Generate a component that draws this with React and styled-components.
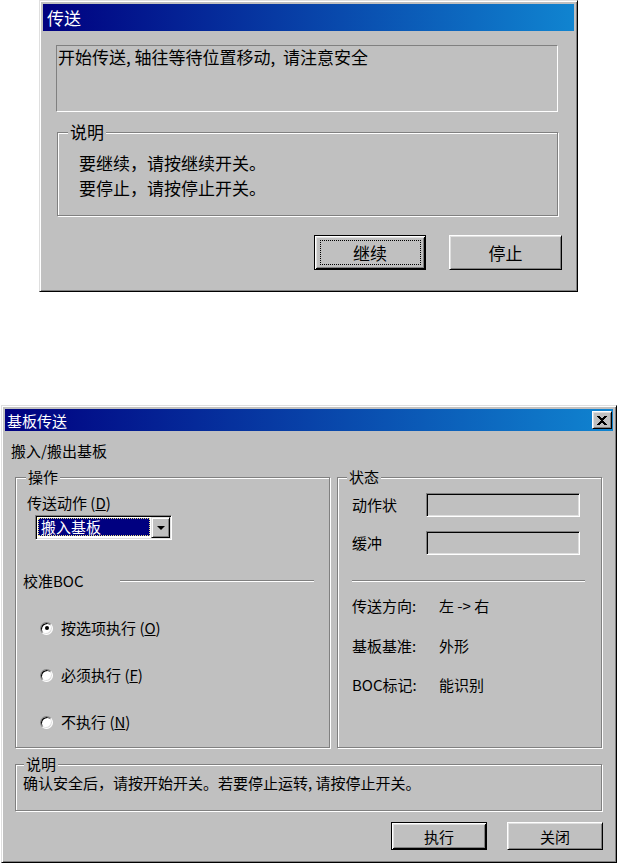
import React from "react";
import styled, { createGlobalStyle, css } from "styled-components";

const FACE = "#c0c0c0";
const FONT = `"Noto Sans CJK SC", "Noto Sans", sans-serif`;

const GlobalStyle = createGlobalStyle`
  html, body { margin: 0; padding: 0; background: #fff; }
  body { font-family: ${FONT}; color: #000; }
  * { box-sizing: border-box; }
`;

const Page = styled.div`
  display: flex;
  flex-direction: column;
  align-items: flex-start;
`;

const Window = styled.div`
  width: ${(p) => p.$w}px;
  height: ${(p) => p.$h}px;
  margin: ${(p) => p.$margin};
  display: flex;
  flex-direction: column;
  padding: 3px;
  background: ${FACE};
  border: 1px solid;
  border-color: #dfdfdf #000 #000 #dfdfdf;
  box-shadow: inset 1px 1px #fff, inset -1px -1px #808080;
  font-size: ${(p) => p.$font}px;
`;

const TitleBar = styled.div`
  flex: none;
  height: ${(p) => p.$h}px;
  display: flex;
  align-items: center;
  justify-content: space-between;
  padding: 0 1px 0 ${(p) => p.$indent}px;
  background: linear-gradient(to right, #000080, #1084d0);
  color: #fff;
  line-height: 1;
`;

const CloseButton = styled.button`
  width: 20px;
  height: 18px;
  padding: 0;
  display: flex;
  align-items: center;
  justify-content: center;
  background: ${FACE};
  border: 1px solid;
  border-color: #fff #000 #000 #fff;
  box-shadow: inset 1px 1px #dfdfdf, inset -1px -1px #808080;
`;

const Client = styled.div`
  flex: 1;
  display: flex;
  flex-direction: column;
  padding: ${(p) => p.$pad};
`;

const MessageBox = styled.div`
  height: 67px;
  padding: 1px 0 0 1px;
  border: 1px solid;
  border-color: #808080 #fff #fff #808080;
  line-height: 20px;
  white-space: pre;
`;

const Group = styled.fieldset`
  margin: ${(p) => p.$margin || 0};
  padding: 0;
  min-width: 0;
  height: ${(p) => (p.$h ? `${p.$h}px` : "auto")};
  border: 1px solid #808080;
  box-shadow: inset 1px 1px #fff, 1px 1px #fff;
`;

const Legend = styled.legend`
  margin-left: ${(p) => p.$offset}px;
  padding: 0 2px;
  line-height: ${(p) => p.$lh}px;
  background: ${FACE};
`;

const NoteLines = styled.div`
  padding: 8px 0 15px 21px;
  line-height: 25px;
`;

const ButtonRow = styled.div`
  display: flex;
  justify-content: flex-end;
  gap: ${(p) => p.$gap}px;
  margin: ${(p) => p.$margin};
`;

const Button = styled.button`
  position: relative;
  width: ${(p) => p.$w}px;
  height: ${(p) => p.$h}px;
  padding: 0;
  font-family: ${FONT};
  font-size: inherit;
  color: #000;
  background: ${FACE};
  border: 1px solid;
  border-color: #fff #000 #000 #fff;
  box-shadow: inset 1px 1px #dfdfdf, inset -1px -1px #808080;
  ${(p) =>
    p.$default &&
    css`
      border-color: #000;
      box-shadow: inset 1px 1px #fff, inset -1px -1px #000,
        inset 2px 2px #dfdfdf, inset -2px -2px #808080;
    `}
  ${(p) =>
    p.$focused &&
    css`
      &::after {
        content: "";
        position: absolute;
        inset: 4px 4px 4px 5px;
        border: 1px dotted #000;
      }
    `}
`;

const Caption = styled.div`
  line-height: 18px;
`;

const GroupRow = styled.div`
  display: grid;
  grid-template-columns: 315px 265px;
  gap: 7px;
  margin: 8px 0 0 4px;
`;

const Column = styled.div`
  display: flex;
  flex-direction: column;
  padding: ${(p) => p.$pad};
`;

const Label = styled.div`
  line-height: 18px;
  margin: ${(p) => p.$margin || 0};
  white-space: pre;
`;

const Key = styled.span`
  text-decoration: underline;
`;

const Combo = styled.div`
  width: 137px;
  height: 25px;
  margin: 3px 0 0 19px;
  display: flex;
  background: #fff;
  border: 1px solid;
  border-color: #808080 #fff #fff #808080;
  box-shadow: inset 1px 1px #000, inset -1px -1px #dfdfdf;
  padding: 1px;
`;

const ComboValue = styled.div`
  flex: 1;
  margin: 1px 1px 2px 1px;
  padding-left: 2px;
  background: #000080;
  color: #fff;
  line-height: 16px;
  border: 1px dotted #e8e080;
`;

const ComboArrow = styled.div`
  width: 19px;
  display: flex;
  align-items: center;
  justify-content: center;
  background: ${FACE};
  border: 1px solid;
  border-color: #dfdfdf #000 #000 #dfdfdf;
  box-shadow: inset 1px 1px #fff, inset -1px -1px #808080;

  &::before {
    content: "";
    border-left: 4px solid transparent;
    border-right: 4px solid transparent;
    border-top: 4px solid #000;
  }
`;

const SectionRow = styled.div`
  display: flex;
  align-items: center;
  margin: ${(p) => p.$margin};
  padding: ${(p) => p.$pad};
`;

const SectionLabel = styled.span`
  width: 97px;
  line-height: 18px;
`;

const Etched = styled.div`
  flex: ${(p) => (p.$grow ? 1 : "none")};
  height: 2px;
  margin: ${(p) => p.$margin || 0};
  border-top: 1px solid #808080;
  border-bottom: 1px solid #fff;
`;

const RadioList = styled.div`
  display: flex;
  flex-direction: column;
  gap: 29px;
  margin: 29px 0 0 24px;
`;

const RadioRow = styled.label`
  display: flex;
  align-items: center;
  gap: 8px;
  line-height: 18px;
`;

const RadioDot = styled.span`
  flex: none;
  width: 13px;
  height: 13px;
  border-radius: 50%;
  display: flex;
  align-items: center;
  justify-content: center;
  background: #fff;
  border: 1px solid;
  border-color: #808080 #fff #fff #808080;
  box-shadow: inset 1px 1px #000, inset -1px -1px #dfdfdf;

  &::after {
    content: "";
    display: ${(p) => (p.$checked ? "block" : "none")};
    width: 4px;
    height: 4px;
    border-radius: 50%;
    background: #000;
  }
`;

const FieldRow = styled.div`
  display: flex;
  align-items: center;
  margin-top: ${(p) => p.$top}px;
`;

const FieldLabel = styled.span`
  width: ${(p) => p.$w}px;
  line-height: 18px;
  white-space: pre;
`;

const Field = styled.div`
  width: 154px;
  height: 24px;
  background: ${FACE};
  border: 1px solid;
  border-color: #808080 #fff #fff #808080;
  box-shadow: inset 1px 1px #000, inset -1px -1px #dfdfdf;
`;

const NoteText = styled.div`
  padding: 2px 0 0 7px;
  line-height: 18px;
  white-space: pre;
`;

function CloseGlyph() {
  return (
    <svg width="10" height="9" viewBox="0 0 10 9" shapeRendering="crispEdges">
      <path
        fill="#000"
        d="M0 0h3v1H0zM7 0h3v1H7zM1 1h3v1H1zM6 1h3v1H6zM2 2h6v1H2zM3 3h4v1H3zM4 4h2v1H4zM3 5h4v1H3zM2 6h6v1H2zM1 7h3v1H1zM6 7h3v1H6zM0 8h3v1H0zM7 8h3v1H7z"
      />
    </svg>
  );
}

function TransferAlert() {
  return (
    <Window $w={539} $h={292} $margin="0 0 0 39px" $font={17}>
      <TitleBar $h={27} $indent={4}>
        <span>传送</span>
      </TitleBar>
      <Client $pad="14px 16px 0 13px">
        <MessageBox>{"开始传送, 轴往等待位置移动,  请注意安全"}</MessageBox>
        <Group $margin="10px 0 0 1px">
          <Legend $offset={10} $lh={20}>
            说明
          </Legend>
          <NoteLines>
            <div>要继续，请按继续开关。</div>
            <div>要停止，请按停止开关。</div>
          </NoteLines>
        </Group>
        <ButtonRow $gap={23} $margin="19px -4px 0 0">
          <Button $w={112} $h={35} $default $focused>
            继续
          </Button>
          <Button $w={113} $h={35}>
            停止
          </Button>
        </ButtonRow>
      </Client>
    </Window>
  );
}

const RADIOS = [
  { text: "按选项执行 ", key: "O", checked: true },
  { text: "必须执行 ", key: "F" },
  { text: "不执行 ", key: "N" },
];

const INFO = [
  { label: "传送方向:", value: "左 -> 右", top: 15 },
  { label: "基板基准:", value: "外形", top: 22 },
  { label: "BOC标记:", value: "能识别", top: 21 },
];

function BoardTransfer() {
  return (
    <Window $w={616} $h={458} $margin="113px 0 0 1px" $font={15}>
      <TitleBar $h={22} $indent={2}>
        <span>基板传送</span>
        <CloseButton>
          <CloseGlyph />
        </CloseButton>
      </TitleBar>
      <Client $pad="11px 11px 0 6px">
        <Caption>搬入/搬出基板</Caption>
        <GroupRow>
          <Group $h={280}>
            <Legend $offset={10} $lh={18}>
              操作
            </Legend>
            <Column $pad="0 15px 0 0">
              <Label $margin="8px 0 0 11px">
                传送动作 (<Key>D</Key>)
              </Label>
              <Combo>
                <ComboValue>搬入基板</ComboValue>
                <ComboArrow />
              </Combo>
              <SectionRow $margin="32px 0 0 0" $pad="0 0 0 7px">
                <SectionLabel>校准BOC</SectionLabel>
                <Etched $grow />
              </SectionRow>
              <RadioList>
                {RADIOS.map((r) => (
                  <RadioRow key={r.key}>
                    <RadioDot $checked={r.checked} />
                    <span>
                      {r.text}(<Key>{r.key}</Key>)
                    </span>
                  </RadioRow>
                ))}
              </RadioList>
            </Column>
          </Group>
          <Group $h={280}>
            <Legend $offset={9} $lh={18}>
              状态
            </Legend>
            <Column $pad="0 0 0 14px">
              <FieldRow $top={7}>
                <FieldLabel $w={74}>动作状</FieldLabel>
                <Field />
              </FieldRow>
              <FieldRow $top={14}>
                <FieldLabel $w={74}>缓冲</FieldLabel>
                <Field />
              </FieldRow>
              <Etched $margin="25px 16px 0 0" />
              {INFO.map((row) => (
                <FieldRow key={row.label} $top={row.top}>
                  <FieldLabel $w={87}>{row.label}</FieldLabel>
                  <FieldLabel>{row.value}</FieldLabel>
                </FieldRow>
              ))}
            </Column>
          </Group>
        </GroupRow>
        <Group $h={55} $margin="8px 0 0 4px">
          <Legend $offset={8} $lh={16}>
            说明
          </Legend>
          <NoteText>确认安全后，请按开始开关。若要停止运转, 请按停止开关。</NoteText>
        </Group>
        <ButtonRow $gap={20} $margin="11px -1px 0 0">
          <Button $w={96} $h={28} $default>
            执行
          </Button>
          <Button $w={96} $h={28}>
            关闭
          </Button>
        </ButtonRow>
      </Client>
    </Window>
  );
}

export default function App() {
  return (
    <Page>
      <GlobalStyle />
      <TransferAlert />
      <BoardTransfer />
    </Page>
  );
}
